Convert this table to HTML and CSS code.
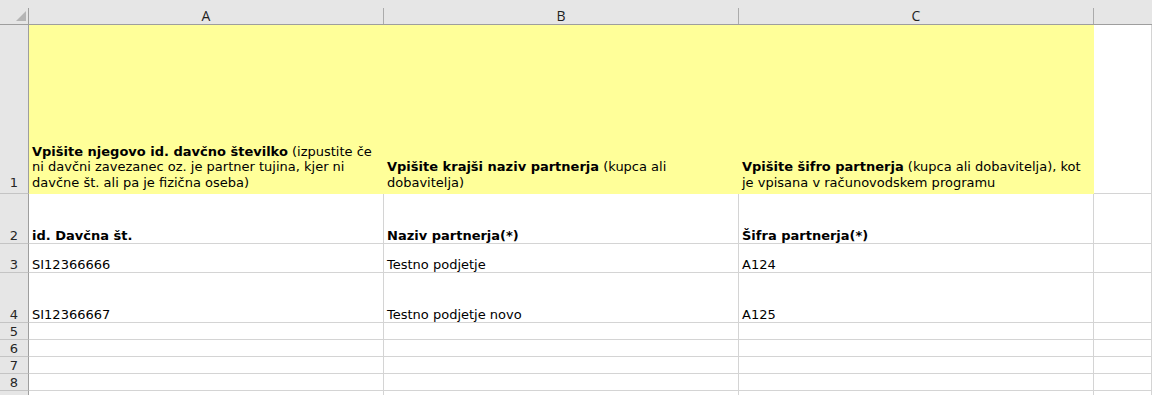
FILE: index.html
```html
<!DOCTYPE html>
<html lang="sl">
<head>
<meta charset="utf-8">
<title>Partnerji</title>
<link rel="stylesheet" href="styles.css">
</head>
<body>
<div class="sheet">
  <div class="colhead corner"><div class="lbl"><svg class="tri" width="10" height="10" viewBox="0 0 10 10"><polygon points="10,0 10,10 0,10" fill="#b5b5b5"/></svg></div></div>
  <div class="colhead"><div class="lbl">A</div></div>
  <div class="colhead"><div class="lbl">B</div></div>
  <div class="colhead"><div class="lbl">C</div></div>
  <div class="colhead last"><div class="lbl"></div></div>

  <div class="rowhead first">1</div>
  <div class="cell yellow"><span><b>Vpišite njegovo id. davčno številko</b> (izpustite če<br>ni davčni zavezanec oz. je partner tujina, kjer ni<br>davčne št. ali pa je fizična oseba)</span></div>
  <div class="cell yellow"><span><b>Vpišite krajši naziv partnerja</b> (kupca ali<br>dobavitelja)</span></div>
  <div class="cell yellow"><span><b>Vpišite šifro partnerja</b> (kupca ali dobavitelja), kot<br>je vpisana v računovodskem programu</span></div>
  <div class="cell"></div>

  <div class="rowhead">2</div>
  <div class="cell"><b>id. Davčna št.</b></div>
  <div class="cell"><b>Naziv partnerja(*)</b></div>
  <div class="cell"><b>Šifra partnerja(*)</b></div>
  <div class="cell"></div>

  <div class="rowhead">3</div>
  <div class="cell">SI12366666</div>
  <div class="cell">Testno podjetje</div>
  <div class="cell">A124</div>
  <div class="cell"></div>

  <div class="rowhead">4</div>
  <div class="cell">SI12366667</div>
  <div class="cell">Testno podjetje novo</div>
  <div class="cell">A125</div>
  <div class="cell"></div>

  <div class="rowhead">5</div>
  <div class="cell"></div><div class="cell"></div><div class="cell"></div><div class="cell"></div>
  <div class="rowhead">6</div>
  <div class="cell"></div><div class="cell"></div><div class="cell"></div><div class="cell"></div>
  <div class="rowhead">7</div>
  <div class="cell"></div><div class="cell"></div><div class="cell"></div><div class="cell"></div>
  <div class="rowhead">8</div>
  <div class="cell"></div><div class="cell"></div><div class="cell"></div><div class="cell"></div>
  <div class="rowhead"></div>
  <div class="cell"></div><div class="cell"></div><div class="cell"></div><div class="cell"></div>
</div>
</body>
</html>
```

FILE: styles.css
```css
html, body {
  margin: 0;
  padding: 0;
  background: #ffffff;
  overflow: hidden;
}

.sheet {
  display: grid;
  grid-template-columns: 29px 355px 355px 355px 1fr;
  grid-template-rows: 25px 169px 50px 29px 50px 17px 17px 17px 17px 17px;
  width: 1152px;
  height: 395px;
  overflow: hidden;
  font-family: "DejaVu Sans", Verdana, sans-serif;
  font-size: 13px;
  color: #000000;
}

.colhead {
  box-sizing: border-box;
  background: #e6e6e6;
  border-bottom: 1px solid #9e9e9e;
  padding-top: 8px;
}

.colhead .lbl {
  box-sizing: border-box;
  height: 16px;
  border-right: 1px solid #ababab;
  text-align: center;
  font-family: "Open Sans", "Noto Sans", sans-serif;
  font-size: 14px;
  line-height: 16px;
  color: #1f1f1f;
}

.corner .lbl {
  border-right-color: #9e9e9e;
  display: flex;
  justify-content: flex-end;
  align-items: flex-start;
}

.corner .tri {
  margin-top: 3px;
  margin-right: 2px;
}

.colhead.last .lbl {
  border-right: none;
}

.rowhead {
  box-sizing: border-box;
  background: #e6e6e6;
  border-right: 1px solid #9e9e9e;
  border-bottom: 1px solid #c4c4c4;
  display: flex;
  align-items: flex-end;
  justify-content: center;
  line-height: 15px;
  color: #262626;
}

.rowhead.first {
  padding-bottom: 3px;
}

.cell {
  box-sizing: border-box;
  border-right: 1px solid #d4d4d4;
  border-bottom: 1px solid #d4d4d4;
  display: flex;
  align-items: flex-end;
  padding-left: 3px;
  line-height: 15px;
  white-space: nowrap;
  overflow: hidden;
}

.cell.yellow {
  background: #ffff99;
  border-color: #ffff99;
  padding-bottom: 3px;
  line-height: 15.5px;
  overflow: visible;
}

b {
  font-weight: bold;
}
```
